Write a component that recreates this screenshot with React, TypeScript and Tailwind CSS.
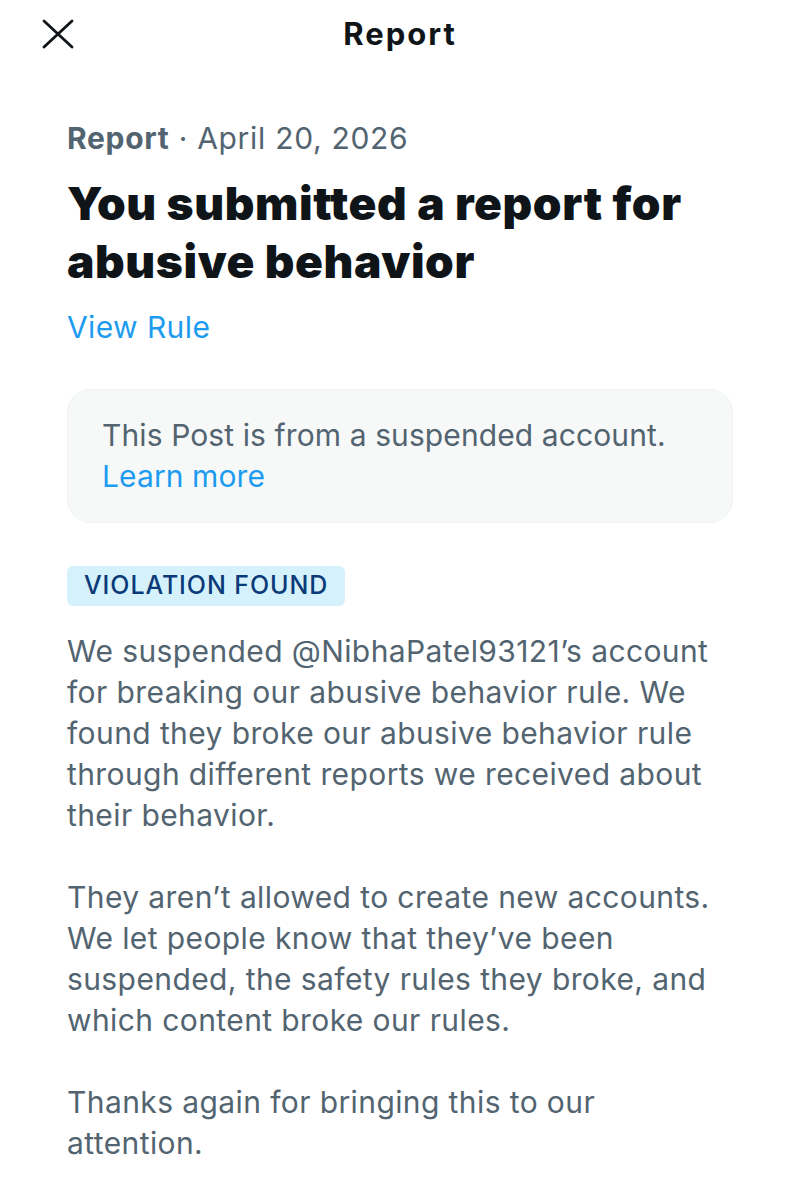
const font = { fontFamily: 'Inter, "Noto Sans", sans-serif' }

function CloseIcon() {
  return (
    <svg viewBox="0 0 32 30" className="h-[30px] w-[32px]" fill="none" stroke="#0f1419" strokeWidth={2.8} strokeLinecap="round">
      <path d="M2 2 L30 28 M30 2 L2 28" />
    </svg>
  )
}

export default function App() {
  return (
    <div className="min-h-[1200px] w-[800px] bg-white text-[#0f1419]" style={font}>
      {/* Top bar */}
      <div className="relative flex h-[68px] items-center justify-center">
        <button className="absolute left-[42px] top-[19px] flex">
          <CloseIcon />
        </button>
        <h1 className="text-[31px] font-bold tracking-[2px]">Report</h1>
      </div>

      <div className="px-[67px] pt-[50px]">
        <p className="text-[30px] leading-[40px] tracking-[0.7px] text-[#536471]">
          <span className="font-bold">Report</span> · April 20, 2026
        </p>

        <h2 className="mt-[16px] whitespace-nowrap text-[46px] font-black leading-[58px] tracking-[0.6px]">
          You submitted a report for
          <br />
          abusive behavior
        </h2>

        <a className="mt-[17px] block text-[30px] leading-[40px] tracking-[0.4px] text-[#1d9bf0]">View Rule</a>

        <div className="mt-[42px] rounded-[24px] border border-[#eff3f4] bg-[#f7f9f9] px-[34px] py-[25px]">
          <p className="whitespace-nowrap text-[30px] leading-[41px] tracking-[0.1px] text-[#536471]">
            This Post is from a suspended account.
          </p>
          <a className="block text-[30px] leading-[41px] tracking-[0.1px] text-[#1d9bf0]">Learn more</a>
        </div>

        <div className="mt-[43px] inline-flex h-[40px] items-center rounded-[6px] bg-[#d5f2fc] px-[17px]">
          <span className="text-[25px] font-medium tracking-[0.9px] text-[#0b3a78]">VIOLATION FOUND</span>
        </div>

        <div className="mt-[25px] space-y-[41px] whitespace-nowrap text-[30px] leading-[41px] tracking-[0.4px] text-[#536471]">
          <p>
            We suspended @NibhaPatel93121’s account
            <br />
            for breaking our abusive behavior rule. We
            <br />
            found they broke our abusive behavior rule
            <br />
            through different reports we received about
            <br />
            their behavior.
          </p>
          <p>
            They aren’t allowed to create new accounts.
            <br />
            We let people know that they’ve been
            <br />
            suspended, the safety rules they broke, and
            <br />
            which content broke our rules.
          </p>
          <p>
            Thanks again for bringing this to our
            <br />
            attention.
          </p>
        </div>
      </div>
    </div>
  )
}
